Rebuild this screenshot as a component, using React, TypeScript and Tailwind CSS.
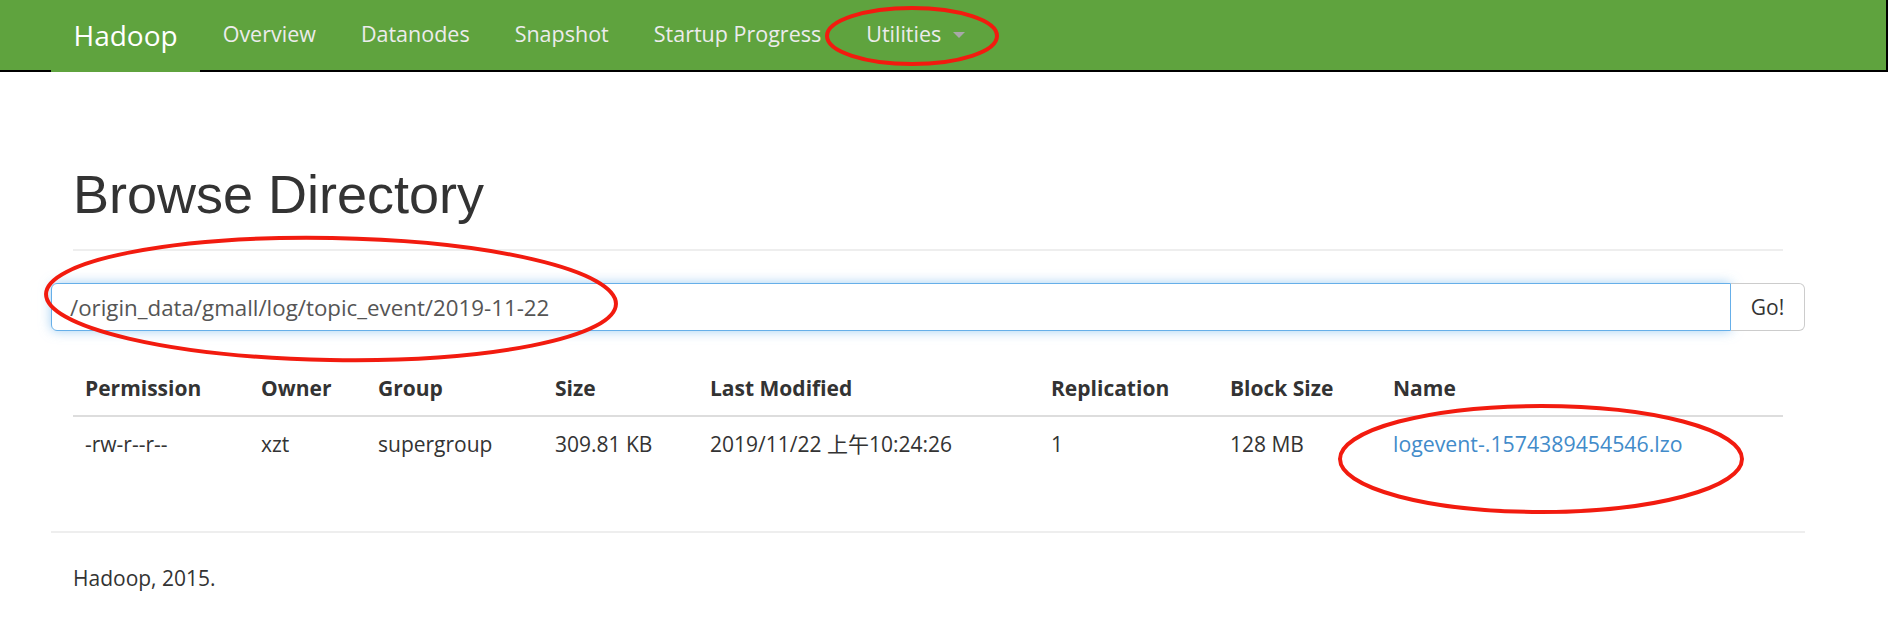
import React from "react";

const navItems = ["Overview", "Datanodes", "Snapshot", "Startup Progress"];

const columns = [
  "Permission",
  "Owner",
  "Group",
  "Size",
  "Last Modified",
  "Replication",
  "Block Size",
  "Name",
];

const row = [
  "-rw-r--r--",
  "xzt",
  "supergroup",
  "309.81 KB",
  "2019/11/22 上午10:24:26",
  "1",
  "128 MB",
];

const gridCols =
  "grid grid-cols-[176px_117px_177px_155px_341px_179px_163px_1fr]";

const NavBar: React.FC = () => (
  <div className="flex h-[72px] border-b-2 border-r-2 border-black bg-[#5fa33e]">
    <div className="flex pl-[51px]">
      <a className="-mb-[2px] flex h-[72px] items-center bg-[#5fa33e] px-[22.5px] pb-[2px] text-[28px] text-white">
        Hadoop
      </a>
      {navItems.map((label) => (
        <a
          key={label}
          className="flex items-center px-[22.5px] pb-[2px] text-[21.5px] text-[#ececec]"
        >
          {label}
        </a>
      ))}
      <a className="flex items-center px-[22.5px] pb-[2px] text-[21.5px] text-[#ececec]">
        Utilities
        <span className="ml-[12px] mt-[2px] h-0 w-0 border-x-[6px] border-t-[6px] border-x-transparent border-t-[#a8a8a8]" />
      </a>
    </div>
  </div>
);

const Annotations: React.FC = () => (
  <svg
    className="pointer-events-none absolute left-0 top-0"
    width="1888"
    height="617"
    viewBox="0 0 1888 617"
  >
    <g fill="none" stroke="#f21b0f" strokeWidth="4">
      <ellipse cx="912" cy="36" rx="85" ry="28" />
      <ellipse cx="331" cy="299" rx="285" ry="61" transform="rotate(1 331 299)" />
      <ellipse cx="1541" cy="459" rx="201" ry="53" />
    </g>
  </svg>
);

export default function App() {
  return (
    <div className="relative h-[617px] w-[1888px] overflow-hidden bg-white font-['Open_Sans',sans-serif] text-[#333]">
      <NavBar />

      <div className="w-[1805px] pl-[51px]">
        <div className="px-[22px]">
          <h1 className="mt-[93px] font-['Liberation_Sans',Arial,sans-serif] text-[54px] leading-[1.1] text-[#333]">
            Browse Directory
          </h1>
          <div className="mt-[25px] h-[2px] bg-[#eee]" />
        </div>

        <div className="mt-[32px] flex h-[48px]">
          <div className="flex flex-1 items-center rounded-l-[6px] border border-[#66afe9] pl-[18px] text-[22.3px] text-[#555] shadow-[0_0_12px_rgba(102,175,233,0.6)]">
            /origin_data/gmall/log/topic_event/2019-11-22
          </div>
          <button className="flex w-[74px] items-center justify-center rounded-r-[6px] border border-l-0 border-[#ccc] bg-white text-[21px] text-[#333]">
            Go!
          </button>
        </div>

        <div className="mx-[22px] mt-[30px]">
          <div className={`${gridCols} h-[56px] items-center border-b-2 border-[#ddd] text-[21px] font-bold`}>
            {columns.map((c) => (
              <div key={c} className="px-[12px]">
                {c}
              </div>
            ))}
          </div>
          <div className={`${gridCols} h-[54px] items-center text-[21px]`}>
            {row.map((v, i) => (
              <div key={i} className="px-[12px] font-['Open_Sans','Noto_Sans_CJK_SC',sans-serif]">
                {v}
              </div>
            ))}
            <div className="px-[12px]">
              <a className="text-[21.3px] text-[#428bca]">logevent-.1574389454546.lzo</a>
            </div>
          </div>
        </div>

        <div className="mt-[60px] h-[2px] bg-[#eee]" />
        <div className="px-[22px] pt-[30px] text-[21px]">Hadoop, 2015.</div>
      </div>

      <Annotations />
    </div>
  );
}
